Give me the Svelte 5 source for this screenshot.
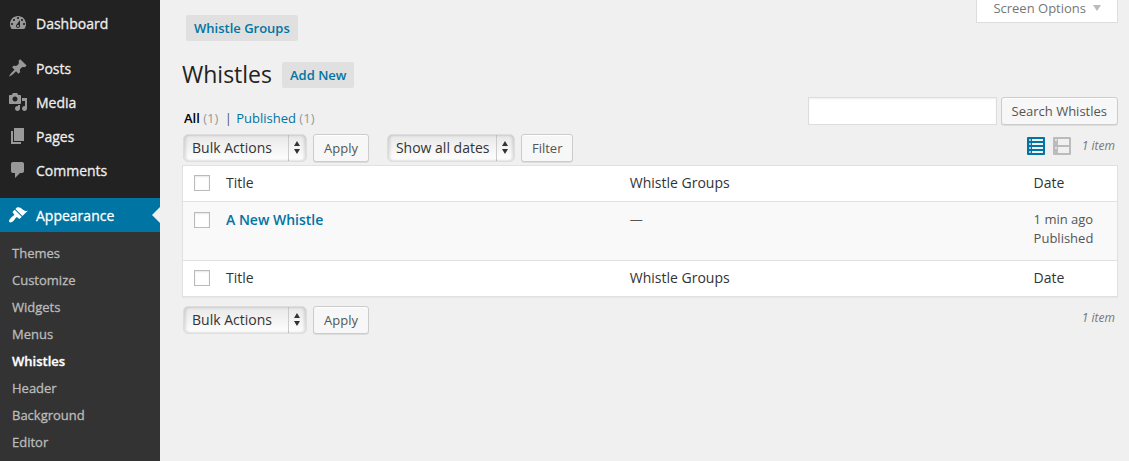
<script>
  // dashicon shapes, drawn on a 20x20 grid
  const icons = {
    dashboard:
      "M3.76 16h12.48c1.1-1.37 1.76-3.11 1.76-5 0-4.42-3.58-8-8-8s-8 3.58-8 8c0 1.89.66 3.63 1.76 5zM10 4c.55 0 1 .45 1 1s-.45 1-1 1-1-.45-1-1 .45-1 1-1zM6 6c.55 0 1 .45 1 1s-.45 1-1 1-1-.45-1-1 .45-1 1-1zm8 0c.55 0 1 .45 1 1s-.45 1-1 1-1-.45-1-1 .45-1 1-1zm-5.37 5.55L12 7v6c0 1.1-.9 2-2 2s-2-.9-2-2c0-.57.24-1.08.63-1.45zM4 10c.55 0 1 .45 1 1s-.45 1-1 1-1-.45-1-1 .45-1 1-1zm12 0c.55 0 1 .45 1 1s-.45 1-1 1-1-.45-1-1 .45-1 1-1zm-5 3c0-.55-.45-1-1-1s-1 .45-1 1 .45 1 1 1 1-.45 1-1z",
    posts:
      "M10.44 3.02l1.82-1.82 6.36 6.35-1.83 1.82c-1.05-.68-2.48-.57-3.41.36l-.75.75c-.92.93-1.04 2.35-.35 3.41l-1.83 1.82-2.41-2.41-2.8 2.79c-.42.42-3.38 2.71-3.8 2.29s1.86-3.39 2.28-3.81l2.79-2.79L4.1 9.36l1.83-1.82c1.05.69 2.48.57 3.4-.36l.75-.75c.93-.92 1.05-2.35.36-3.41z",
    media:
      "M13 11V4c0-.55-.45-1-1-1h-1.67L9 1H5L3.67 3H2c-.55 0-1 .45-1 1v7c0 .55.45 1 1 1h10c.55 0 1-.45 1-1zM7 4.5c1.38 0 2.5 1.12 2.5 2.5S8.38 9.5 7 9.5 4.5 8.38 4.5 7 5.62 4.5 7 4.5zM14 6h5v10.5c0 1.38-1.12 2.5-2.5 2.5S14 17.88 14 16.5s1.12-2.5 2.5-2.5c.17 0 .34.02.5.05V9h-3V6zm-4 8.05V13h2v3.5c0 1.38-1.12 2.5-2.5 2.5S7 17.88 7 16.5 8.12 14 9.5 14c.17 0 .34.02.5.05z",
    pages: "M6 15V2h10v13H6zm-1 1h8v2H3V5h2v11z",
    comments:
      "M5 2h9c1.1 0 2 .9 2 2v7c0 1.1-.9 2-2 2h-2l-5 5v-5H5c-1.1 0-2-.9-2-2V4c0-1.1.9-2 2-2z",
    appearance:
      "M14.48 11.06L7.41 3.99l1.5-1.5c.5-.56 2.3-.47 3.51.32 1.21.8 1.43 1.28 2.91 2.1 1.18.64 2.45 1.26 4.45.85zm-.71.71L6.7 4.7 4.93 6.47c-.39.39-.39 1.02 0 1.41l1.06 1.06c.39.39.39 1.03 0 1.42-.6.6-1.43 1.11-2.21 1.69-.35.26-.7.53-1.01.84C1.43 14.23.4 16.08 1.4 17.07c.99 1 2.84-.03 4.18-1.36.31-.31.58-.66.85-1.02.57-.78 1.08-1.61 1.69-2.21.39-.39 1.02-.39 1.41 0l1.06 1.06c.39.39 1.02.39 1.41 0z"
  };

  // the menu is split in groups with a gap between them
  const menuGroups = [
    [{ label: "Dashboard", icon: "dashboard" }],
    [
      { label: "Posts", icon: "posts" },
      { label: "Media", icon: "media" },
      { label: "Pages", icon: "pages" },
      { label: "Comments", icon: "comments" }
    ],
    [{ label: "Appearance", icon: "appearance", current: true }]
  ];

  const submenu = [
    "Themes",
    "Customize",
    "Widgets",
    "Menus",
    "Whistles",
    "Header",
    "Background",
    "Editor"
  ];

  const whistles = [
    { title: "A New Whistle", groups: "—", date: "1 min ago", status: "Published" }
  ];

  let search = $state("");
  let selected = $state(whistles.map(() => false));
  let allSelected = $derived(selected.every((s) => s));

  function toggleAll() {
    const value = !allSelected;
    selected = whistles.map(() => value);
  }
</script>

{#snippet dropdown(label, option)}
  <span class="select">
    <select aria-label={label}>
      <option>{option}</option>
    </select>
    <svg width="6" height="13" viewBox="0 0 6 13" aria-hidden="true">
      <path d="M3 0l3 5H0zM3 13L0 8h6z" />
    </svg>
  </span>
{/snippet}

{#snippet headings()}
  <tr>
    <th class="check">
      <input type="checkbox" aria-label="Select all" checked={allSelected} onchange={toggleAll} />
    </th>
    <th>Title</th>
    <th>Whistle Groups</th>
    <th class="date">Date</th>
  </tr>
{/snippet}

<div class="admin">
  <nav class="menu">
    {#each menuGroups as group}
      <ul>
        {#each group as item}
          <li>
            <a href="#{item.icon}" class:current={item.current}>
              <svg width="20" height="20" viewBox="0 0 20 20" aria-hidden="true">
                <path d={icons[item.icon]} />
              </svg>
              {item.label}
            </a>
          </li>
        {/each}
      </ul>
    {/each}
    <ul class="submenu">
      {#each submenu as name}
        <li>
          <a href="#{name}" class:active={name === "Whistles"}>{name}</a>
        </li>
      {/each}
    </ul>
  </nav>

  <main>
    <div class="top">
      <a href="#groups" class="action">Whistle Groups</a>
      <button class="screen-options">
        Screen Options
        <svg width="8" height="6" viewBox="0 0 8 6" aria-hidden="true">
          <path d="M0 0h8L4 6z" />
        </svg>
      </button>
    </div>

    <div class="heading">
      <h1>Whistles</h1>
      <a href="#new" class="action">Add New</a>
    </div>

    <div class="filters">
      <div class="views">
        <a href="#all" class="all">All <span>(1)</span></a>
        |
        <a href="#published">Published <span>(1)</span></a>
      </div>
      <form class="search" onsubmit={(e) => e.preventDefault()}>
        <input type="search" aria-label="Search Whistles" bind:value={search} />
        <button class="button">Search Whistles</button>
      </form>
    </div>

    <div class="tablenav">
      {@render dropdown("Bulk actions", "Bulk Actions")}
      <button class="button">Apply</button>
      <span class="dates">{@render dropdown("Filter by date", "Show all dates")}</span>
      <button class="button">Filter</button>
      <div class="paging">
        <button class="mode on" aria-label="List view">
          <svg width="18" height="18" viewBox="0 0 18 18">
            <rect width="18" height="18" rx="1" />
            <path
              class="gaps"
              d="M5 2h11v2H5zM5 6h11v2H5zM5 10h11v2H5zM5 14h11v2H5z"
            />
            <path class="dots" d="M2 2h2v2H2zM2 6h2v2H2zM2 10h2v2H2zM2 14h2v2H2z" />
          </svg>
        </button>
        <button class="mode" aria-label="Excerpt view">
          <svg width="18" height="18" viewBox="0 0 18 18">
            <rect width="18" height="18" rx="1" />
            <path class="gaps" d="M5 2h11v6H5zM5 10h11v6H5z" />
            <path class="dots" d="M2 2h2v2H2zM2 10h2v2H2z" />
          </svg>
        </button>
        <em>1 item</em>
      </div>
    </div>

    <table>
      <thead>{@render headings()}</thead>
      <tbody>
        {#each whistles as whistle, i}
          <tr>
            <td class="check">
              <input
                type="checkbox"
                aria-label="Select {whistle.title}"
                bind:checked={selected[i]}
              />
            </td>
            <td><a href="#edit" class="title">{whistle.title}</a></td>
            <td>{whistle.groups}</td>
            <td class="date">{whistle.date}<br />{whistle.status}</td>
          </tr>
        {/each}
      </tbody>
      <tfoot>{@render headings()}</tfoot>
    </table>

    <div class="tablenav bottom">
      {@render dropdown("Bulk actions", "Bulk Actions")}
      <button class="button">Apply</button>
      <div class="paging"><em>1 item</em></div>
    </div>
  </main>
</div>

<style>
  :global(body) {
    margin: 0;
    background: #f0f0f0;
  }

  .admin {
    display: flex;
    min-height: 100vh;
    font-family: "Open Sans", sans-serif;
    font-size: 13px;
    line-height: 19px;
    color: #555;
  }

  a {
    color: #0074a2;
    text-decoration: none;
  }

  ul {
    list-style: none;
    margin: 0;
    padding: 0;
  }

  button,
  input,
  select {
    box-sizing: border-box;
    margin: 0;
    font: inherit;
  }

  svg {
    display: block;
  }

  /* left menu */
  .menu {
    display: flex;
    flex-direction: column;
    flex: 0 0 160px;
    gap: 11px;
    padding-top: 6px;
    background: #222;
  }

  .menu a {
    position: relative;
    display: flex;
    align-items: center;
    gap: 8px;
    height: 34px;
    padding: 0 8px;
    font-size: 14px;
    color: #eee;
    -webkit-text-stroke: 0.3px;
  }

  .menu svg {
    fill: #999;
  }

  .menu .current {
    background: #0074a2;
    color: #fff;
  }

  .menu .current svg {
    fill: #fff;
  }

  /* notch pointing at the open section */
  .menu .current::after {
    content: "";
    position: absolute;
    right: 0;
    top: 9px;
    border: 8px solid transparent;
    border-left: 0;
    border-right-color: #f0f0f0;
  }

  .menu .submenu {
    flex: 1;
    margin-top: -11px;
    padding: 8px 0 5px;
    background: #333;
  }

  .submenu a {
    height: 27px;
    padding: 0 12px;
    font-size: 13px;
    color: #bbb;
  }

  .submenu .active {
    font-weight: 600;
    color: #fff;
  }

  /* page */
  main {
    flex: 1;
    min-width: 0;
    padding: 0 11px 0 22px;
  }

  .top {
    display: flex;
    align-items: flex-start;
    justify-content: space-between;
  }

  .action {
    padding: 4px 8px 3px;
    border-radius: 2px;
    background: #e0e0e0;
    font-weight: 600;
  }

  .top .action {
    margin: 15px 0 0 4px;
  }

  .screen-options {
    display: flex;
    align-items: center;
    gap: 7px;
    height: 23px;
    padding: 0 16px 6px;
    border: 1px solid #ddd;
    border-top: 0;
    background: #fff;
    color: #777;
  }

  .screen-options svg {
    fill: #bbb;
  }

  .heading {
    display: flex;
    align-items: center;
    gap: 10px;
    padding: 17px 0 5px;
  }

  h1 {
    margin: 0;
    padding-bottom: 2px;
    font-size: 23px;
    font-weight: 400;
    line-height: 32px;
    color: #222;
  }

  .filters {
    display: flex;
    justify-content: space-between;
  }

  .views {
    padding: 12px 2px 0;
  }

  .views a {
    margin-right: 3px;
  }

  .views a + a {
    margin-left: 1px;
  }

  .views .all {
    font-weight: 600;
    color: #000;
  }

  .views span {
    font-weight: 400;
    color: #999;
  }

  .search {
    display: flex;
    gap: 4px;
  }

  .search input {
    width: 189px;
    height: 28px;
    padding: 3px 5px;
    border: 1px solid #ddd;
    background: #fff;
    box-shadow: inset 0 1px 2px rgba(0, 0, 0, 0.07);
    appearance: none;
  }

  .button {
    height: 28px;
    padding: 0 10px;
    border: 1px solid #ccc;
    border-radius: 3px;
    background: #f7f7f7;
    box-shadow: inset 0 1px 0 #fff, 0 1px 0 rgba(0, 0, 0, 0.08);
    color: #555;
    white-space: nowrap;
  }

  .tablenav {
    display: flex;
    align-items: center;
    gap: 6px;
    padding: 6px 0 3px 1px;
  }

  .tablenav.bottom {
    padding-top: 9px;
  }

  .dates {
    margin-left: 12px;
  }

  .select {
    position: relative;
    display: block;
  }

  .select select {
    display: block;
    min-width: 124px;
    height: 28px;
    padding: 0 24px 2px 8px;
    border: 1px solid #ddd;
    border-radius: 5px;
    background:
      linear-gradient(#ccc, #ccc) right 17px top / 1px 100% no-repeat,
      linear-gradient(#e8e8e8, #fff);
    box-shadow: inset 2px 0 3px rgba(0, 0, 0, 0.12), inset -2px 0 3px rgba(0, 0, 0, 0.12);
    font-size: 14px;
    color: #333;
    appearance: none;
  }

  /* up and down arrows over the end of the select */
  .select svg {
    position: absolute;
    right: 7px;
    top: 7px;
    fill: #333;
    pointer-events: none;
  }

  .paging {
    display: flex;
    align-items: center;
    gap: 8px;
    margin-left: auto;
    padding: 0 3px 5px 0;
  }

  .paging em {
    margin-left: 3px;
    font-size: 12px;
    color: #777;
  }

  .mode {
    padding: 0;
    border: 0;
    background: none;
    fill: #bbb;
  }

  .mode.on {
    fill: #0074a2;
  }

  .gaps {
    fill: #f0f0f0;
  }

  .dots {
    fill: #f0f0f0;
    opacity: 0.7;
  }

  /* list of whistles */
  table {
    width: 100%;
    table-layout: fixed;
    border: 1px solid #e1e1e1;
    border-spacing: 0;
    background: #fff;
    box-shadow: 0 1px 1px rgba(0, 0, 0, 0.04);
  }

  th {
    height: 19px;
    padding: 7px 10px 9px;
    font-size: 14px;
    font-weight: 400;
    text-align: left;
    vertical-align: top;
    color: #333;
  }

  thead th {
    border-bottom: 1px solid #e1e1e1;
  }

  tfoot th {
    border-top: 1px solid #e1e1e1;
  }

  td {
    height: 42px;
    padding: 8px 10px;
    vertical-align: top;
    background: #f9f9f9;
  }

  .check {
    width: 33px;
    padding-left: 11px;
    padding-right: 0;
    box-sizing: border-box;
  }

  /* border-box here, so these carry the full row height */
  th.check {
    height: 36px;
  }

  .date {
    width: 10%;
    box-sizing: border-box;
  }

  .check input {
    display: block;
    width: 16px;
    height: 16px;
    margin-top: 2px;
    border: 1px solid #bbb;
    background: #fff;
    box-shadow: inset 0 1px 2px rgba(0, 0, 0, 0.1);
    appearance: none;
  }

  .check input:checked {
    background: #0074a2;
  }

  .title {
    font-size: 14px;
    font-weight: 600;
  }
</style>
